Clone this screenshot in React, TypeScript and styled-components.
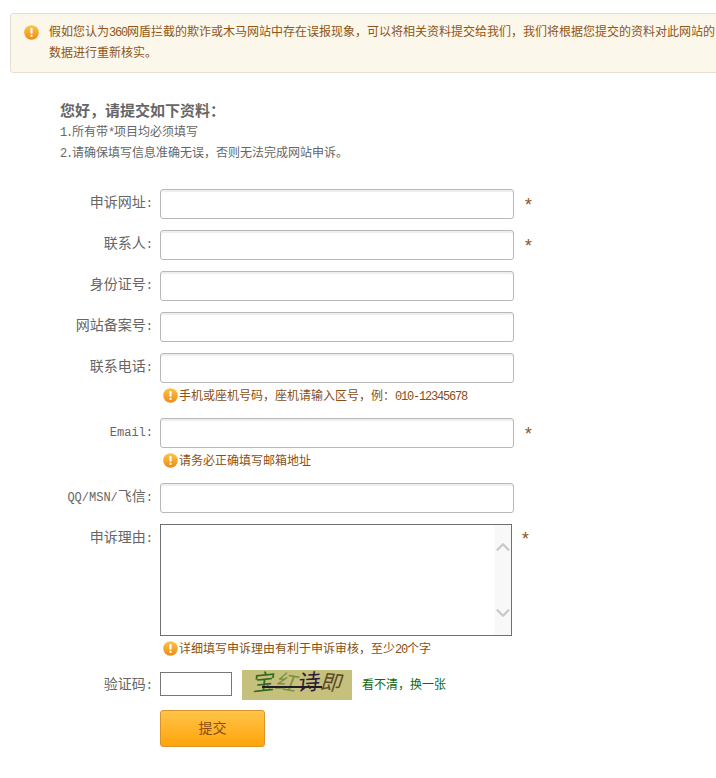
import React from 'react'
import styled, { createGlobalStyle } from 'styled-components'
import { ChevronDown, ChevronUp } from 'lucide-react'

const fontStack = `"Liberation Mono", "Noto Sans CJK SC", monospace`

const GlobalStyle = createGlobalStyle`
  html, body {
    margin: 0;
    padding: 0;
    background: #fff;
    overflow: hidden;
  }
  body {
    font-family: ${fontStack};
    font-size: 12px;
    color: #666;
  }
`

const WarnIcon = ({ size = 15 }: { size?: number }) => (
  <svg width={size} height={size} viewBox="0 0 15 15">
    <defs>
      <linearGradient id="warn" x1="0" y1="0" x2="0" y2="1">
        <stop offset="0" stopColor="#fbc64a" />
        <stop offset="1" stopColor="#f08a12" />
      </linearGradient>
    </defs>
    <circle cx="7.5" cy="7.5" r="7.3" fill="url(#warn)" />
    <rect x="6.4" y="3" width="2.2" height="5.8" rx="1" fill="#fff" />
    <rect x="6.4" y="9.8" width="2.2" height="2.2" rx="1" fill="#fff" />
  </svg>
)

export default function App() {
  return (
    <Page>
      <GlobalStyle />
      <Notice>
        <NoticeIcon><WarnIcon /></NoticeIcon>
        <NoticeText>
          假如您认为<Latin>360</Latin>网盾拦截的欺诈或木马网站中存在误报现象，可以将相关资料提交给我们，我们将根据您提交的资料对此网站的
          <br />
          数据进行重新核实。
        </NoticeText>
      </Notice>

      <Intro>
        <Title>您好，请提交如下资料：</Title>
        <IntroLine><Latin>1.</Latin>所有带<Latin>*</Latin>项目均必须填写</IntroLine>
        <IntroLine><Latin>2.</Latin>请确保填写信息准确无误，否则无法完成网站申诉。</IntroLine>
      </Intro>

      <Form onSubmit={(e) => e.preventDefault()}>
        {fields.map((field, index) => (
          <Row key={index}>
            <Label>{field.label}<LabelLatin>:</LabelLatin></Label>
            <Field>
              <InputLine>
                <TextInput />
                {field.required && <Star>*</Star>}
              </InputLine>
              {field.hint && (
                <Hint>
                  <WarnIcon size={15} />
                  <span>{field.hint}</span>
                </Hint>
              )}
            </Field>
          </Row>
        ))}

        <Row>
          <Label>申诉理由<LabelLatin>:</LabelLatin></Label>
          <Field>
            <InputLine>
              <AreaWrap>
                <TextArea />
                <ScrollTrack>
                  <ChevronUp size={22} strokeWidth={2.4} color="#c8c8c8" />
                  <ChevronDown size={22} strokeWidth={2.4} color="#c8c8c8" />
                </ScrollTrack>
              </AreaWrap>
              <AreaStar>*</AreaStar>
            </InputLine>
            <Hint>
              <WarnIcon size={15} />
              <span>详细填写申诉理由有利于申诉审核，至少<Latin>20</Latin>个字</span>
            </Hint>
          </Field>
        </Row>

        <CaptchaRow>
          <CaptchaLabel>验证码<LabelLatin>:</LabelLatin></CaptchaLabel>
          <CaptchaInput />
          <Captcha>
            <CaptchaChar $color="#2f6a1c" $size={22} $turn={-6}>宝</CaptchaChar>
            <CaptchaChar $color="#7d8f42" $size={21} $turn={10}>红</CaptchaChar>
            <CaptchaChar $color="#2c1a3e" $size={22} $turn={-4}>诗</CaptchaChar>
            <CaptchaChar $color="#5c4a2a" $size={21} $turn={6}>即</CaptchaChar>
          </Captcha>
          <Refresh>看不清，换一张</Refresh>
        </CaptchaRow>

        <SubmitButton type="submit">提交</SubmitButton>
      </Form>
    </Page>
  )
}

const Page = styled.div`
  width: 716px;
  height: 778px;
  overflow: hidden;
`

const Notice = styled.div`
  display: flex;
  width: 730px;
  height: 58px;
  margin: 13px 0 0 10px;
  background: #fbf7ea;
  border: 1px solid #e6dfcb;
  border-radius: 3px;
`

const NoticeIcon = styled.div`
  flex: none;
  width: 15px;
  height: 15px;
  margin: 11px 10px 0 13px;
`

const NoticeText = styled.div`
  flex: none;
  line-height: 21px;
  padding-top: 9px;
  color: #8f5518;
  white-space: nowrap;
`

const Latin = styled.span`
  letter-spacing: -1.2px;
`

const LabelLatin = styled.span`
  font-size: 12px;
`

const Intro = styled.div`
  margin: 29px 0 0 60px;
  height: 87px;
`

const Title = styled.div`
  font-size: 15px;
  font-weight: bold;
  line-height: 21px;
  color: #666;
`

const IntroLine = styled.div`
  line-height: 21px;
  color: #666;
`

const Form = styled.form`
  display: flex;
  flex-direction: column;
`

const Row = styled.div`
  display: flex;
  margin-bottom: 11px;
`

const Label = styled.label`
  flex: none;
  width: 153px;
  margin-right: 7px;
  text-align: right;
  font-size: 14px;
  line-height: 28px;
  color: #666;
  white-space: nowrap;
`

const Field = styled.div`
  display: flex;
  flex-direction: column;
`

const InputLine = styled.div`
  display: flex;
`

const TextInput = styled.input`
  box-sizing: border-box;
  width: 354px;
  height: 30px;
  padding: 0 6px;
  background: #fff;
  border: 1px solid #b8b8b8;
  border-radius: 3px;
  box-shadow: inset 0 2px 1px #eee;
  outline: none;
`

const Star = styled.span`
  margin-left: 9px;
  font-size: 18px;
  line-height: 34px;
  height: 30px;
  color: #8f5518;
`

const AreaStar = styled(Star)`
  margin-left: 8px;
  line-height: 32px;
`

const AreaWrap = styled.div`
  position: relative;
  width: 352px;
  height: 112px;
`

const TextArea = styled.textarea`
  display: block;
  box-sizing: border-box;
  width: 352px;
  height: 112px;
  margin: 0;
  padding: 2px;
  background: #fff;
  border: 1px solid #707070;
  border-radius: 0;
  outline: none;
  resize: none;
  overflow: hidden;
`

const ScrollTrack = styled.div`
  position: absolute;
  top: 1px;
  right: 1px;
  bottom: 1px;
  width: 16px;
  display: flex;
  flex-direction: column;
  justify-content: space-between;
  align-items: center;
  padding: 11px 0;
  box-sizing: border-box;
  background: #f8f8f8;
`

const Hint = styled.div`
  display: flex;
  align-items: center;
  gap: 1px;
  height: 24px;
  padding-left: 3px;
  color: #8a4f12;
  white-space: nowrap;
`

const CaptchaRow = styled.div`
  display: flex;
  align-items: center;
  height: 30px;
  margin-top: -1px;
  margin-bottom: 10px;
`

const CaptchaLabel = styled(Label)`
  line-height: 28px;
`

const CaptchaInput = styled.input`
  box-sizing: border-box;
  width: 72px;
  height: 24px;
  margin: 0 10px 2px 0;
  padding: 0 4px;
  background: #fff;
  border: 1px solid #777;
  border-radius: 0;
  outline: none;
`

const Captcha = styled.div`
  position: relative;
  display: flex;
  align-items: center;
  gap: 1px;
  width: 110px;
  height: 30px;
  margin-right: 10px;
  padding-left: 11px;
  box-sizing: border-box;
  background: #c5c07c;

  &::after {
    content: '';
    position: absolute;
    left: 20px;
    top: 16px;
    width: 60px;
    height: 2px;
    background: #241a2c;
  }
`

const CaptchaChar = styled.span<{ $color: string; $size: number; $turn: number }>`
  display: inline-block;
  font-size: ${(props) => props.$size}px;
  line-height: 30px;
  color: ${(props) => props.$color};
  transform: rotate(${(props) => props.$turn}deg) skewX(-12deg);
`

const Refresh = styled.a`
  margin-bottom: 2px;
  color: #0c6a12;
  white-space: nowrap;
`

const SubmitButton = styled.button`
  box-sizing: border-box;
  width: 105px;
  height: 37px;
  margin-left: 160px;
  padding: 0 0 3px;
  font-family: ${fontStack};
  font-size: 14px;
  color: #8a4f12;
  background: linear-gradient(#ffc44a, #ffa40a);
  border: 1px solid #d8942a;
  border-radius: 3px;
  cursor: pointer;
`

const fields = [
  { label: '申诉网址', required: true },
  { label: '联系人', required: true },
  { label: '身份证号' },
  { label: '网站备案号' },
  { label: '联系电话', hint: <>手机或座机号码，座机请输入区号，例：<Latin>010-12345678</Latin></> },
  { label: <LabelLatin>Email</LabelLatin>, required: true, hint: <>请务必正确填写邮箱地址</> },
  { label: <><LabelLatin>QQ/MSN/</LabelLatin>飞信</> },
]
